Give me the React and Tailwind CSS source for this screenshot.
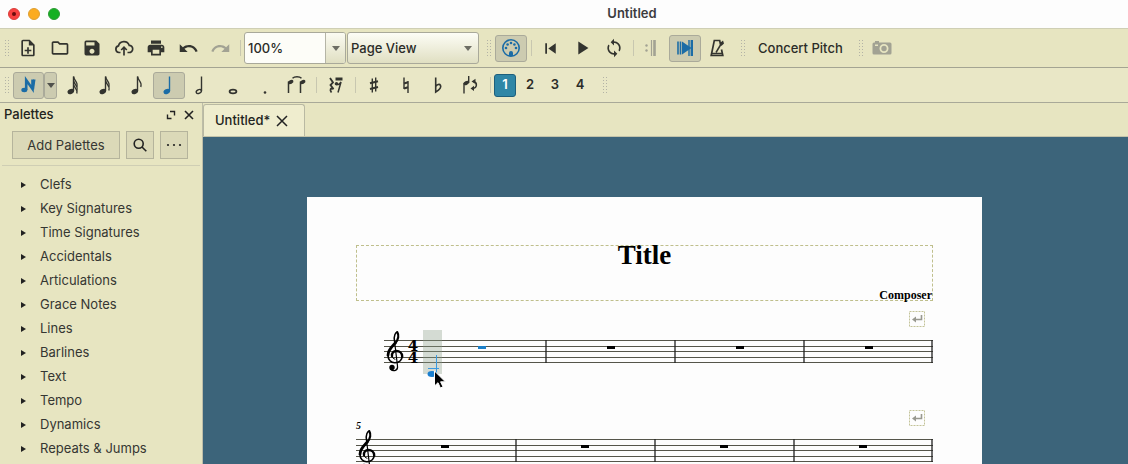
import React from "react";
import {
  MdOutlineNoteAdd, MdOutlineFolder, MdSave, MdPrint, MdUndo, MdRedo,
  MdSkipPrevious, MdPlayArrow, MdLoop,
} from "react-icons/md";

function Grip() {
  return (
    <svg className="w-[5px] h-4 shrink-0 text-[#b3b3a6]" viewBox="0 0 5 16" fill="currentColor" aria-hidden="true">
      {[0, 3, 6, 9, 12, 15].map((y) => (
        <g key={y}>
          <rect x="0" y={y} width="1" height="1" />
          <rect x="3" y={y} width="1" height="1" />
        </g>
      ))}
    </svg>
  );
}

function Separator() {
  return <span className="block w-px h-4 shrink-0 bg-[#c8c7b0]" />;
}

function Tool({ label, active, disabled, children }) {
  const base = "w-8 h-[27px] shrink-0 flex items-center justify-center rounded-[3px] border ";
  const look = active
    ? "bg-[#cccbb0] border-[#aaaa9a] text-[#1b6ca6]"
    : disabled
    ? "border-transparent text-[#a2a293]"
    : "border-transparent text-[#33342f]";
  return (
    <button type="button" aria-label={label} disabled={disabled} className={base + look}>
      {children}
    </button>
  );
}

function Glyph({ children }) {
  return (
    <svg className="w-6 h-6" viewBox="0 0 24 24" fill="none" stroke="currentColor" strokeWidth="1.4" aria-hidden="true">
      {children}
    </svg>
  );
}

function Note({ flags = 0, hollow }) {
  return (
    <Glyph>
      <ellipse cx="9.8" cy="18.5" rx="2.7" ry="1.8" transform="rotate(-25 9.8 18.5)" fill={hollow ? "none" : "currentColor"} />
      <path d="M12.5 18V3.5" />
      {flags > 0 && <path d="M12.7 3.5C12.7 8 17.5 8 15.8 14" strokeWidth="1.3" />}
      {flags > 1 && <path d="M12.7 7.5C12.7 11.5 17.5 12 15.8 17.5" strokeWidth="1.3" />}
      {flags > 2 && <path d="M12.7 11.5C12.7 15 17 15.5 15.8 20.5" strokeWidth="1.3" />}
    </Glyph>
  );
}

const noteTools = [
  ["32nd note", <Note flags={3} />],
  ["16th note", <Note flags={2} />],
  ["8th note", <Note flags={1} />],
  ["Quarter note", <Note />, true],
  ["Half note", <Note hollow />],
  ["Whole note", <Glyph><ellipse cx="12" cy="18.5" rx="3.4" ry="1.8" strokeWidth="1.8" /></Glyph>],
  ["Augmentation dot", <Glyph><circle cx="12" cy="19.5" r="1.3" fill="currentColor" stroke="none" /></Glyph>],
  ["Tie", (
    <Glyph>
      <path d="M3.5 20V8.5M15.5 20V8.5" strokeWidth="1.5" />
      <ellipse cx="5.8" cy="9" rx="2.8" ry="1.9" transform="rotate(-25 5.8 9)" fill="currentColor" stroke="none" />
      <ellipse cx="17.8" cy="9" rx="2.8" ry="1.9" transform="rotate(-25 17.8 9)" fill="currentColor" stroke="none" />
      <path d="M7.5 5.3C9.5 3.3 14.5 3.3 16.5 5.3" />
    </Glyph>
  )],
];

function Caret() {
  return (
    <svg className="w-2 h-[5px]" viewBox="0 0 8 5" aria-hidden="true"><path d="M0 0h8L4 5z" fill="currentColor" /></svg>
  );
}

function MainToolbar() {
  return (
    <div className="h-10 shrink-0 flex items-center bg-[#e7e5c1] border-t border-[#cfcfb5] border-b border-b-[#a4a492] pl-[5px] text-[13px] text-[#2b2c28]">
      <Grip />
      <div className="flex ml-0.5">
        <Tool label="New"><MdOutlineNoteAdd size={20} /></Tool>
        <Tool label="Open"><MdOutlineFolder size={20} /></Tool>
        <Tool label="Save"><MdSave size={20} /></Tool>
        <Tool label="Save online">
          <Glyph>
            <path d="M8.5 16.5H7A3.4 3.4 0 0 1 6.5 9.8A5.6 5.6 0 0 1 17.2 9.3A3.6 3.6 0 0 1 17 16.5H15.5M12 19.5V11.5M9.2 14L12 11.2L14.8 14" strokeWidth="1.7" />
          </Glyph>
        </Tool>
        <Tool label="Print"><MdPrint size={20} /></Tool>
        <Tool label="Undo"><MdUndo size={21} /></Tool>
        <Tool label="Redo" disabled><MdRedo size={21} /></Tool>
      </div>
      <span className="ml-1"><Separator /></span>
      <div className="ml-[3px] flex h-8 w-[102px] border border-[#a9a99a] rounded-[3px] bg-[#fdfdf8] overflow-hidden">
        <input aria-label="Zoom" defaultValue="100%" className="w-20 min-w-0 pt-px pl-[3px] bg-transparent font-medium outline-none" />
        <button type="button" aria-label="Zoom levels" className="flex-1 flex items-center justify-center border-l border-[#b5b5a6] bg-linear-to-b from-[#fbfbf2] to-[#e0dfc2] text-[#6d6d64]"><Caret /></button>
      </div>
      <div className="ml-px relative flex items-center h-8 w-[132px] border border-[#a9a99a] rounded-[3px] bg-linear-to-b from-[#fdfdf6] to-[#e0dfc2]">
        <select aria-label="View mode" className="appearance-none w-full h-full pt-px pl-[3px] font-medium bg-transparent outline-none">
          <option>Page View</option>
        </select>
        <span className="absolute right-1.5 text-[#6d6d64] pointer-events-none"><Caret /></span>
      </div>
      <span className="ml-2"><Grip /></span>
      <span className="ml-[3px]">
        <Tool label="MIDI input" active>
          <Glyph>
            <circle cx="12" cy="12" r="8.2" strokeWidth="1.6" />
            <g fill="currentColor" stroke="none">
              <circle cx="7" cy="12" r="1.3" /><circle cx="8.6" cy="8.5" r="1.3" /><circle cx="12" cy="7" r="1.3" />
              <circle cx="15.4" cy="8.5" r="1.3" /><circle cx="17" cy="12" r="1.3" />
              <path d="M10 20v-3a2 2 0 0 1 4 0v3z" />
            </g>
          </Glyph>
        </Tool>
      </span>
      <span className="ml-1"><Separator /></span>
      <div className="flex ml-0.5">
        <Tool label="Rewind"><MdSkipPrevious size={21} /></Tool>
        <Tool label="Play"><MdPlayArrow size={22} /></Tool>
        <Tool label="Loop"><MdLoop size={20} /></Tool>
      </div>
      <span className="ml-[3px]"><Separator /></span>
      <div className="flex">
        <Tool label="Play repeats" disabled>
          <Glyph>
            <path d="M13.5 4v16" strokeWidth="1.2" /><path d="M16.5 4v16" strokeWidth="2.6" />
            <circle cx="8.5" cy="9.5" r="1.2" fill="currentColor" stroke="none" /><circle cx="8.5" cy="14.5" r="1.2" fill="currentColor" stroke="none" />
          </Glyph>
        </Tool>
        <span className="ml-[3px]">
          <Tool label="Pan score" active>
            <Glyph>
              <path d="M5 5.5v13M7.5 5.5v13" strokeWidth="1.6" /><path d="M16 4v16" strokeWidth="1.4" /><path d="M18.8 4v16" strokeWidth="2.4" />
              <path d="M9 5.5l9.5 6.5L9 18.5z" fill="currentColor" stroke="none" />
            </Glyph>
          </Tool>
        </span>
        <Tool label="Metronome">
          <Glyph>
            <path d="M15.5 8.5L14.7 4.5H9.3L6.2 19.5H17.8L16.5 13.5M6.8 17.5H17.2" strokeWidth="1.7" />
            <path d="M11 16.5L17 6.5" strokeWidth="1.5" /><path d="M15 7l3-2.5 1 3-2.6 2.5z" fill="currentColor" stroke="none" />
          </Glyph>
        </Tool>
      </div>
      <span className="ml-2"><Grip /></span>
      <button type="button" className="ml-3 pt-px whitespace-nowrap font-medium">Concert Pitch</button>
      <span className="ml-4"><Grip /></span>
      <span className="ml-0.5">
        <Tool label="Image capture" disabled>
          <svg className="w-5 h-4" viewBox="0 0 20 16" aria-hidden="true">
            <path fill="currentColor" fillRule="evenodd" d="M3 1h4v1.500h11A1.500 1.500 0 0 1 19.500 4v9A1.500 1.500 0 0 1 18 14.500H2A1.500 1.500 0 0 1 .5 13V4A1.500 1.500 0 0 1 2 2.500h1zM12 4a4.500 4.500 0 1 0 0 9a4.500 4.500 0 0 0 0-9zm0 1.800a2.700 2.700 0 1 1 0 5.400a2.700 2.700 0 0 1 0-5.400zM3 4.500h3V6H3z" />
          </svg>
        </Tool>
      </span>
    </div>
  );
}

function NoteToolbar() {
  const voice = "w-[22px] h-[23px] rounded-[3px] border ";
  return (
    <div className="h-[35px] shrink-0 flex items-center bg-[#e9e7c6] border-b border-[#a9a998] pl-[5px] text-[13px] text-[#2b2c28]">
      <Grip />
      <button type="button" aria-label="Note input" className="ml-[3px] w-[31px] h-[27px] flex items-center justify-center bg-[#cccbb0] border border-[#aaaa9a] rounded-[3px] text-[#1b6ca6]">
        <Glyph>
          <path d="M9.2 17V7L15.5 16V6.5" strokeWidth="2.6" />
          <path d="M15.5 16.5h1.6l1.4-10h-2.5z" fill="currentColor" stroke="none" />
          <ellipse cx="7.3" cy="17" rx="3" ry="2.2" fill="currentColor" stroke="none" />
        </Glyph>
      </button>
      <button type="button" aria-label="Input modes" className="w-[13px] h-[27px] flex items-center justify-center bg-[#cccbb0] border border-[#aaaa9a] rounded-[3px] text-[#50514c]"><Caret /></button>
      <div className="flex">
        {noteTools.map(([label, icon, active]) => (
          <Tool key={label} label={label} active={active}>{icon}</Tool>
        ))}
      </div>
      <span className="ml-[3px]"><Separator /></span>
      <span className="ml-[3px]">
        <Tool label="Rest">
          <Glyph>
            <path d="M6 5L9 9.5L6.5 12L9.5 16C6.5 14.5 5.5 17 7.5 19.5" strokeWidth="1.8" />
            <path d="M11 10.5C13.5 12.5 15.5 11.5 17 9L14 19.5" strokeWidth="1.5" />
            <path d="M11.5 4.5h7v3h-7z" fill="currentColor" stroke="none" /><circle cx="12.5" cy="10.8" r="1.7" fill="currentColor" stroke="none" />
          </Glyph>
        </Tool>
      </span>
      <span className="ml-[3px]"><Separator /></span>
      <div className="flex ml-0.5">
        <Tool label="Sharp"><Glyph><path d="M10.3 5.5v14M13.7 4.5v14" /><path d="M8 10.3l8-2M8 16l8-2" strokeWidth="2.2" /></Glyph></Tool>
        <Tool label="Natural"><Glyph><path d="M10 4.5v11.5M14 8v12" /><path d="M10 10.5l4-1.2M10 15.5l4-1.2" strokeWidth="2.2" /></Glyph></Tool>
        <Tool label="Flat"><Glyph><path d="M9.7 4.5v14.5C13 17 15.5 14.5 14.5 12.3C13.5 10.5 11 11.5 9.7 13.5" strokeWidth="1.6" /></Glyph></Tool>
        <Tool label="Flip direction">
          <Glyph>
            <path d="M6 20.5V10M10.7 10V3" /><ellipse cx="8.3" cy="10" rx="2.9" ry="1.9" transform="rotate(-25 8.3 10)" fill="currentColor" stroke="none" />
            <path d="M15.5 8.5C19.5 9.5 19.5 15 14.5 15.5" strokeWidth="1.5" /><path d="M13.5 8.5l4-2.8v5.2zM16 12.8v5.2l-3.5-2.6z" fill="currentColor" stroke="none" />
          </Glyph>
        </Tool>
      </div>
      <span className="ml-1"><Separator /></span>
      <div className="flex ml-[3px] gap-[3px] font-semibold">
        <button type="button" aria-label="Voice 1" className={voice + "border-[#1d5f7c] bg-[#2f86a6] text-white"}>1</button>
        <button type="button" aria-label="Voice 2" className={voice + "border-transparent"}>2</button>
        <button type="button" aria-label="Voice 3" className={voice + "border-transparent"}>3</button>
        <button type="button" aria-label="Voice 4" className={voice + "border-transparent"}>4</button>
      </div>
      <span className="ml-3"><Grip /></span>
    </div>
  );
}

const palettes = [
  "Clefs", "Key Signatures", "Time Signatures", "Accidentals", "Articulations", "Grace Notes",
  "Lines", "Barlines", "Text", "Tempo", "Dynamics", "Repeats & Jumps",
];

function PalettePanel() {
  const btn = "h-7 flex items-center justify-center border border-[#b5b49c] bg-[#dbd9b8] ";
  return (
    <aside className="w-[203px] shrink-0 border-r border-[#bdbda8] text-[13px] text-[#353632] overflow-hidden">
      <div className="flex items-center h-6 pl-1 pr-2">
        <h2 className="font-medium text-[#222320]">Palettes</h2>
        <button type="button" aria-label="Float panel" className="ml-auto">
          <svg className="w-2.5 h-2.5" viewBox="0 0 10 10" fill="none" stroke="#222" strokeWidth="1.4" aria-hidden="true"><path d="M4 1.5h4.5V5.5M1.5 4.5v4H5.5" /></svg>
        </button>
        <button type="button" aria-label="Close panel" className="ml-2">
          <svg className="w-2.5 h-2.5" viewBox="0 0 10 10" stroke="#222" strokeWidth="1.6" aria-hidden="true"><path d="M1 1l8 8M9 1L1 9" /></svg>
        </button>
      </div>
      <div className="flex gap-1.5 pl-3 pt-1">
        <button type="button" className={btn + "w-[108px] pt-px"}>Add Palettes</button>
        <button type="button" aria-label="Search palettes" className={btn + "w-7"}>
          <svg className="w-[14px] h-[14px]" viewBox="0 0 14 14" fill="none" stroke="#222" strokeWidth="1.6" aria-hidden="true"><circle cx="5.7" cy="5.7" r="4.5" /><path d="M9 9l4.300 4.300" /></svg>
        </button>
        <button type="button" aria-label="More options" className={btn + "w-7"}>
          <svg className="w-4 h-1" viewBox="0 0 16 4" fill="#222" aria-hidden="true"><circle cx="2" cy="2" r="1.1" /><circle cx="8" cy="2" r="1.1" /><circle cx="14" cy="2" r="1.1" /></svg>
        </button>
      </div>
      <ul className="mt-1.5 mx-0.5 border-t border-[#cfceb4] pt-[7px]">
        {palettes.map((p) => (
          <li key={p}>
            <button type="button" className="w-full h-6 flex items-center pl-[19px] gap-3.5 whitespace-nowrap">
              <svg className="w-[5px] h-1.5" viewBox="0 0 5 6" aria-hidden="true"><path d="M0 0l5 3-5 3z" fill="#222" /></svg>
              {p}
            </button>
          </li>
        ))}
      </ul>
    </aside>
  );
}

function TrebleClef({ x, y }) {
  return (
    <g transform={`translate(${x} ${y})`} fill="none" stroke="#000" strokeLinecap="round">
      <circle cx="6" cy="36.5" r="2.7" fill="#000" stroke="none" />
      <path d="M4.5 38.3C7.5 41 12.3 39.5 11.5 35L8.5 10" strokeWidth="1.2" />
      <path d="M8.5 10C7.5 5 9.5 1 11.2 1.2" strokeWidth="1.5" />
      <path d="M11.2 1.2C13 4 12.5 8.5 9.3 12" strokeWidth="2.3" />
      <path d="M9.3 12C5.5 16 2 19 2 24.2" strokeWidth="2.8" />
      <path d="M2 24.2C2 28.7 5 31.8 9 31.7C13.5 31.5 16.2 28.5 16.2 25" strokeWidth="1.6" />
      <path d="M16.2 25.5C16.2 22 13.3 20 10.5 20C7.3 20 5.5 22.5 6 25" strokeWidth="2.4" />
      <path d="M6 25C6.3 27 7.5 27.8 9 28.2" strokeWidth="1" />
    </g>
  );
}

function Staff({ x, bars, rests, selected }) {
  return (
    <g>
      <path stroke="#55554a" d={[10, 16, 21, 27, 32].map((y) => `M${x} ${y}.5H577`).join("")} />
      <path stroke="#222" strokeWidth="1.3" d={bars.map((b) => `M${b} 10V33`).join("")} />
      {rests.map((r, i) => (
        <rect key={r} x={r - 4} y="16" width="8" height="3" fill={i === selected ? "#1a7fc8" : "#000"} />
      ))}
    </g>
  );
}

function LineBreak() {
  return (
    <svg className="block w-4 h-4 ml-auto mr-2" viewBox="0 0 16 16" fill="none" aria-label="System break" role="img">
      <rect x=".5" y=".5" width="15" height="15" stroke="#c3c398" strokeDasharray="2 1" />
      <path d="M12.5 4v4.5H6" stroke="#999990" strokeWidth="1.6" /><path d="M3 8.5l4-3v6z" fill="#999990" />
    </svg>
  );
}

function Score() {
  return (
    <main className="flex-1 min-h-0 overflow-hidden bg-[#3c647a] pt-[60px] pl-[104px]">
      <div className="w-[675px] min-h-full bg-[#fdfdfd] pt-12 px-[49px] text-black">
        <div className="h-14 flex flex-col justify-between border border-dashed border-[#bfbf8c] font-bold font-['Liberation_Serif',serif]">
          <h1 className="text-center text-[27px] leading-[18px]">Title</h1>
          <p className="text-right text-xs leading-[10px]">Composer</p>
        </div>
        <div className="pt-2.5"><LineBreak /></div>
        <svg className="block w-full mt-[3px] overflow-visible" viewBox="0 0 577 60" aria-label="Measures 1 to 4" role="img">
          <Staff x={28} bars={[190, 319, 448, 576]} rests={[126, 255, 384, 513]} selected={0} />
          <rect x="67" y="0" width="19" height="44" fill="#8a9f88" fillOpacity=".36" />
          <TrebleClef x={30} y={1} />
          <g fontFamily="DejaVu Serif, serif" fontWeight="700" fontSize="15" textAnchor="middle">
            <text x="57" y="21">4</text>
            <text x="57" y="33">4</text>
          </g>
          <path d="M72 38.5H83M80.5 25V43" stroke="#3a9ae0" />
          <ellipse cx="76" cy="44" rx="4.5" ry="3" fill="#1a7fd0" />
          <path d="M78.5 41v15l3.5-3.3 2.4 5.3 2.6-1.2-2.4-5h4.8z" fill="#000" stroke="#fff" strokeWidth="1" />
        </svg>
        <div className="pt-5"><LineBreak /></div>
        <svg className="block w-full mt-[3px] overflow-visible" viewBox="0 0 577 60" aria-label="Measures 5 to 8" role="img">
          <text x="0" y="0" fontFamily="Liberation Serif, serif" fontStyle="italic" fontWeight="700" fontSize="10">5</text>
          <Staff x={0} bars={[160, 299, 438, 576]} rests={[89, 229, 368, 507]} />
          <TrebleClef x={2} y={1} />
        </svg>
      </div>
    </main>
  );
}

export default function App() {
  return (
    <div className="h-screen flex flex-col overflow-hidden bg-[#e7e5c1] font-[Inter,sans-serif]">
      <header className="relative h-7 shrink-0 flex items-center justify-center bg-[#fdfdfd] pl-34">
        <div className="absolute left-2 flex gap-2">
          <button type="button" aria-label="Close window" className="w-3 h-3 rounded-full bg-[#f8413f] border border-[#d9403c] flex items-center justify-center"><span className="w-1 h-1 rounded-full bg-[#6b0d0d]" /></button>
          <button type="button" aria-label="Minimize window" className="w-3 h-3 rounded-full bg-[#fbab20] border border-[#dfa033]" />
          <button type="button" aria-label="Zoom window" className="w-3 h-3 rounded-full bg-[#16b023] border border-[#2f9c36]" />
        </div>
        <span className="text-[13px] font-semibold text-[#3c3c3e]">Untitled</span>
      </header>
      <MainToolbar />
      <NoteToolbar />
      <div className="flex-1 min-h-0 flex">
        <PalettePanel />
        <div className="flex-1 min-w-0 flex flex-col">
          <div className="h-[34px] shrink-0 flex items-end border-b border-[#c3c3aa]">
            <div className="h-8 w-[102px] flex items-center pt-px pl-[11px] gap-1.5 rounded-t-[3px] border border-b-0 border-[#b9b9a2] bg-[#efedce] text-[13px] font-medium text-[#222320]">
              Untitled*
              <button type="button" aria-label="Close tab">
                <svg className="w-3 h-3" viewBox="0 0 12 12" stroke="#222" strokeWidth="1.5" aria-hidden="true"><path d="M1 1l10 10M11 1L1 11" /></svg>
              </button>
            </div>
          </div>
          <Score />
        </div>
      </div>
    </div>
  );
}
